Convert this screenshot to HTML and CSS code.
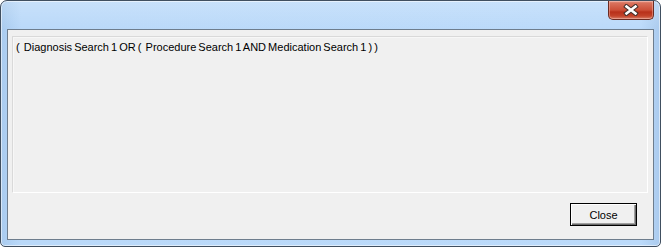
FILE: index.html
```html
<!DOCTYPE html>
<html>
<head>
<meta charset="utf-8">
<link rel="stylesheet" href="styles.css">
</head>
<body>
<div class="window">
  <div class="titlebar">
    <button class="close-x" aria-label="Close">
      <svg width="18" height="12" viewBox="0 0 18 12">
        <path d="M4.5 2.5 L13.5 9.5 M13.5 2.5 L4.5 9.5" stroke="#43302c" stroke-width="4.6" stroke-linecap="square" fill="none"/>
        <path d="M4.5 2.5 L13.5 9.5 M13.5 2.5 L4.5 9.5" stroke="#ffffff" stroke-width="2.6" stroke-linecap="square" fill="none"/>
      </svg>
    </button>
  </div>
  <div class="client">
    <div class="panel">
      <div class="expr">(  Diagnosis Search 1 OR (  Procedure Search 1 AND Medication Search 1 ) )</div>
    </div>
    <div class="actions">
      <button class="btn">Close</button>
    </div>
  </div>
</div>
</body>
</html>
```
FILE: styles.css
```css
html, body {
  margin: 0;
  padding: 0;
  background: #ffffff;
}
body {
  width: 661px;
  height: 247px;
  overflow: hidden;
}
.window {
  box-sizing: border-box;
  width: 661px;
  height: 247px;
  border: 1px solid #404f60;
  border-radius: 7px 7px 5px 5px;
  background:
    linear-gradient(180deg, rgba(255,255,255,0.2) 0px, rgba(255,255,255,0) 28px),
    linear-gradient(90deg, #a9cbef 0px, #bad9f9 20px, #bbdafa 640px, #abcbee 100%);
  padding: 0 6px 6px 6px;
  display: flex;
  flex-direction: column;
  box-shadow: inset 0 0 0 1px rgba(255,255,255,0.55);
}
.titlebar {
  height: 28px;
  display: flex;
  justify-content: flex-end;
  align-items: flex-start;
}
.close-x {
  width: 46px;
  height: 19px;
  padding: 0;
  border: 1px solid #6b2b22;
  border-top: none;
  border-radius: 0 0 5px 5px;
  background: linear-gradient(180deg, #e6a092 0px, #d9725d 2px, #cc4f38 9px, #b8301a 11px, #c3432a 15px, #d8806a 100%);
  box-shadow: inset 0 0 0 1px rgba(255,210,200,0.4);
  display: flex;
  align-items: center;
  justify-content: center;
}
.close-x svg {
  display: block;
}
.client {
  flex: 1;
  border: 1px solid #6e7d8d;
  background: #f0f0f0;
  padding: 6px 5px 0 4px;
  display: flex;
  flex-direction: column;
}
.panel {
  box-sizing: border-box;
  height: 157px;
  border: 1px solid #d9d9d9;
  border-right-color: #ffffff;
  border-bottom-color: #ffffff;
  box-shadow: inset 1px 1px 0 #f7f7f7;
  padding: 4px 3px;
}
.expr {
  font-family: "Liberation Sans", Arial, sans-serif;
  font-size: 11px;
  line-height: 13px;
  color: #000000;
  white-space: pre;
  word-spacing: -1px;
}
.actions {
  display: flex;
  justify-content: flex-end;
  padding: 10px 11px 0 0;
}
.btn {
  box-sizing: border-box;
  width: 67px;
  height: 23px;
  border: 1px solid #000000;
  background: #f0f0f0;
  box-shadow: inset 1px 1px 0 #ffffff, inset -1px -1px 0 #696969, inset -2px -2px 0 #a0a0a0;
  font-family: "Liberation Sans", Arial, sans-serif;
  font-size: 11px;
  color: #000000;
  padding: 0;
}
```
